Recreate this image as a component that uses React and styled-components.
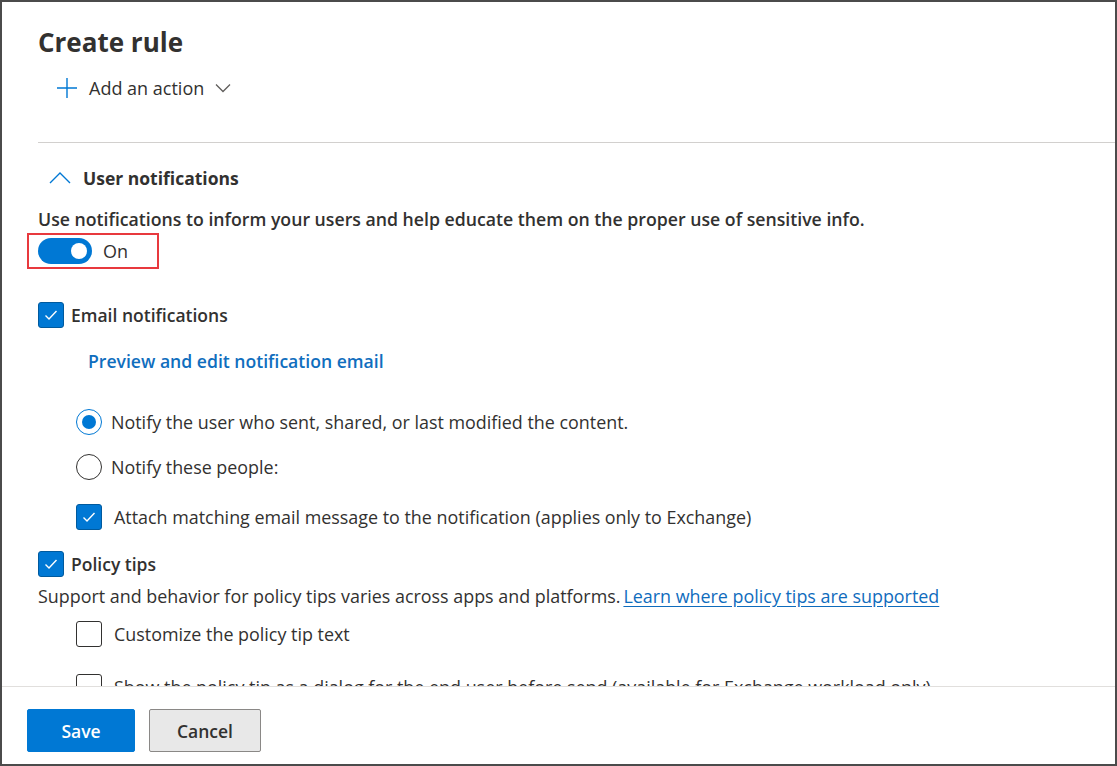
import styled, { createGlobalStyle } from 'styled-components';

const GlobalStyle = createGlobalStyle`
  html, body {
    margin: 0;
    padding: 0;
    background: #ffffff;
  }
  body {
    font-family: "Open Sans", "Noto Sans", sans-serif;
    color: #323130;
  }
`;

const Frame = styled.div`
  box-sizing: border-box;
  width: 1117px;
  height: 766px;
  border: 2px solid #4b4b4b;
  display: flex;
  flex-direction: column;
  overflow: hidden;
  background: #ffffff;
`;

const Body = styled.div`
  flex: 1;
  min-height: 0;
  overflow: hidden;
  padding-left: 36px;
  display: flex;
  flex-direction: column;
  align-items: flex-start;
  & > * {
    flex-shrink: 0;
  }
`;

const Title = styled.h1`
  margin: 22px 0 0;
  height: 36px;
  line-height: 36px;
  font-size: 26px;
  font-weight: 700;
  color: #323130;
`;

const ActionButton = styled.div`
  margin-top: 8px;
  margin-left: 18px;
  height: 40px;
  display: flex;
  align-items: center;
  gap: 11px;
  font-size: 18px;
  color: #323130;
`;

const Divider = styled.hr`
  align-self: stretch;
  margin: 34px 0 0;
  border: 0;
  height: 1px;
  background: #d2d0ce;
`;

const SectionHeader = styled.div`
  margin-top: 19px;
  margin-left: 11px;
  height: 32px;
  display: flex;
  align-items: center;
  gap: 12px;
  font-size: 17.5px;
  font-weight: 700;
`;

const Text = styled.div`
  margin-top: ${(p) => p.$top}px;
  height: 26px;
  display: flex;
  align-items: center;
  font-size: ${(p) => (p.$strong ? 17.7 : 17.9)}px;
  font-weight: ${(p) => (p.$strong ? 600 : 400)};
  white-space: nowrap;
`;

const HighlightBox = styled.div`
  margin-top: 1px;
  margin-left: -11px;
  box-sizing: border-box;
  width: 132px;
  height: 36px;
  border: 2px solid #e8393e;
  padding-left: 9px;
  display: flex;
  align-items: center;
  gap: 11px;
  font-size: 18px;
`;

const Toggle = styled.span`
  box-sizing: border-box;
  width: 54px;
  height: 26px;
  border-radius: 13px;
  background: #0078d4;
  display: flex;
  align-items: center;
  justify-content: flex-end;
  padding-right: 5px;
  &::after {
    content: '';
    width: 16px;
    height: 16px;
    border-radius: 50%;
    background: #ffffff;
  }
`;

const OptionRow = styled.label`
  margin-top: ${(p) => p.$top}px;
  margin-left: ${(p) => p.$indent || 0}px;
  height: 26px;
  display: flex;
  align-items: center;
  gap: ${(p) => p.$gap || 7}px;
  font-size: ${(p) => (p.$strong ? 17.5 : 17.9)}px;
  font-weight: ${(p) => (p.$strong ? 600 : 400)};
  white-space: nowrap;
`;

const Box = styled.span`
  box-sizing: border-box;
  flex: none;
  width: 26px;
  height: 26px;
  border-radius: 3px;
  border: 1px solid ${(p) => (p.$checked ? '#005a9e' : '#323130')};
  background: ${(p) => (p.$checked ? '#0078d4' : '#ffffff')};
  display: flex;
  align-items: center;
  justify-content: center;
`;

const Radio = styled.span`
  box-sizing: border-box;
  flex: none;
  width: 26px;
  height: 26px;
  border-radius: 50%;
  border: 1.5px solid ${(p) => (p.$checked ? '#0078d4' : '#323130')};
  display: flex;
  align-items: center;
  justify-content: center;
  &::after {
    content: '';
    display: ${(p) => (p.$checked ? 'block' : 'none')};
    width: 14px;
    height: 14px;
    border-radius: 50%;
    background: #0078d4;
  }
`;

const LinkText = styled.a`
  margin-top: 20px;
  margin-left: 50px;
  height: 26px;
  display: flex;
  align-items: center;
  font-size: 17.6px;
  font-weight: 600;
  color: #106ebe;
  text-decoration: none;
`;

const InlineLink = styled.a`
  margin-left: 3px;
  color: #0f6cbd;
  text-decoration: underline;
  text-underline-offset: 3px;
`;

const Footer = styled.div`
  box-sizing: border-box;
  flex: none;
  height: 78px;
  border-top: 1px solid #e1dfdd;
  padding: 22px 0 0 25px;
  display: flex;
  align-items: flex-start;
  gap: 14px;
`;

const Button = styled.button`
  box-sizing: border-box;
  height: 43px;
  width: ${(p) => (p.$primary ? 108 : 112)}px;
  border-radius: 2px;
  border: 1px solid ${(p) => (p.$primary ? '#0078d4' : '#8a8886')};
  background: ${(p) => (p.$primary ? '#0078d4' : '#e8e8e8')};
  color: ${(p) => (p.$primary ? '#ffffff' : '#323130')};
  font-family: inherit;
  font-size: 17.5px;
  font-weight: 600;
  padding: 0;
`;

const Check = () => (
  <svg width="16" height="16" viewBox="0 0 16 16">
    <polyline points="2.5,8.5 6,12 13.5,4" fill="none" stroke="#ffffff" strokeWidth="1.4" />
  </svg>
);

const CheckBox = ({ checked }) => <Box $checked={checked}>{checked && <Check />}</Box>;

const PlusIcon = () => (
  <svg width="22" height="22" viewBox="0 0 22 22">
    <path d="M11 1v20M1 11h20" stroke="#0078d4" strokeWidth="1.4" fill="none" />
  </svg>
);

const ChevronDown = () => (
  <svg width="16" height="10" viewBox="0 0 16 10">
    <polyline points="1,1.5 8,8.5 15,1.5" fill="none" stroke="#605e5c" strokeWidth="1.3" />
  </svg>
);

const ChevronUp = () => (
  <svg width="22" height="12" viewBox="0 0 22 12">
    <polyline points="1,11 11,1 21,11" fill="none" stroke="#0078d4" strokeWidth="1.4" />
  </svg>
);

function App() {
  return (
    <>
      <GlobalStyle />
      <Frame>
        <Body>
          <Title>Create rule</Title>
          <ActionButton>
            <PlusIcon />
            <span>Add an action</span>
            <ChevronDown />
          </ActionButton>
          <Divider />
          <SectionHeader>
            <ChevronUp />
            <span>User notifications</span>
          </SectionHeader>
          <Text $top={12} $strong>
            Use notifications to inform your users and help educate them on the proper use of sensitive info.
          </Text>
          <HighlightBox>
            <Toggle />
            <span>On</span>
          </HighlightBox>
          <OptionRow $top={33} $strong>
            <CheckBox checked />
            Email notifications
          </OptionRow>
          <LinkText>Preview and edit notification email</LinkText>
          <OptionRow $top={35} $indent={38} $gap={9}>
            <Radio $checked />
            Notify the user who sent, shared, or last modified the content.
          </OptionRow>
          <OptionRow $top={19} $indent={38} $gap={9}>
            <Radio />
            Notify these people:
          </OptionRow>
          <OptionRow $top={24} $indent={38} $gap={12}>
            <CheckBox checked />
            Attach matching email message to the notification (applies only to Exchange)
          </OptionRow>
          <OptionRow $top={21} $strong>
            <CheckBox checked />
            Policy tips
          </OptionRow>
          <Text $top={6}>
            Support and behavior for policy tips varies across apps and platforms.
            <InlineLink>Learn where policy tips are supported</InlineLink>
          </Text>
          <OptionRow $top={12} $indent={38} $gap={12}>
            <CheckBox />
            Customize the policy tip text
          </OptionRow>
          <OptionRow $top={27} $indent={38} $gap={12}>
            <CheckBox />
            Show the policy tip as a dialog for the end user before send (available for Exchange workload only)
          </OptionRow>
        </Body>
        <Footer>
          <Button $primary>Save</Button>
          <Button>Cancel</Button>
        </Footer>
      </Frame>
    </>
  );
}

export default App;
